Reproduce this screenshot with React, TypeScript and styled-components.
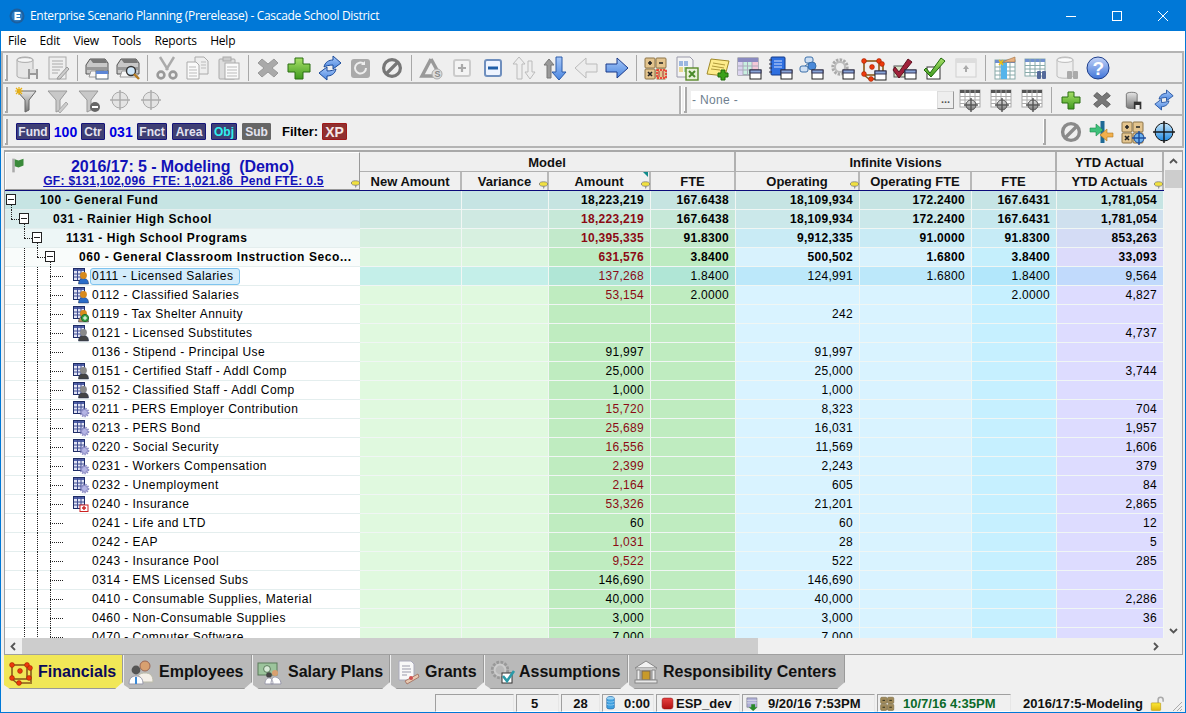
import React from "react";
import styled, { createGlobalStyle } from "styled-components";

const Global = createGlobalStyle`
  html, body { margin: 0; padding: 0; background: #f0f0f0; overflow: hidden; }
  * { box-sizing: border-box; }
  body { font-family: "Liberation Sans", Arial, sans-serif; font-size: 12px; color: #000; }
`;

const Window = styled.div`
  width: 1186px; height: 713px; display: flex; flex-direction: column;
  border: 1px solid #0078d7; border-top: 0; background: #f0f0f0; overflow: hidden;
`;
const TitleBar = styled.div`
  height: 31px; margin: 0 -1px; background: #0078d7; color: #fff; display: flex; align-items: center; padding-left: 9px;
  font-family: "Open Sans", sans-serif; font-size: 12px; flex: none;
`;
const TitleText = styled.span`margin-left: 5px; flex: 1; letter-spacing: -0.31px;`;
const WinBtn = styled.div`width: 46px; height: 31px; display: flex; align-items: center; justify-content: center;`;
const MenuBar = styled.div`
  height: 20px; background: #fff; display: flex; align-items: center; flex: none; padding: 0 0 1px 7px; gap: 13.4px;
  font-family: "Open Sans", sans-serif; font-size: 12px; letter-spacing: -0.2px;
`;
const ToolRow = styled.div<{ $top?: number }>`
  height: 32px; flex: none; display: flex; align-items: center; background: #efefef; margin-right: 1px;
  border-bottom: 2px solid #b4b4b4; border-right: 2px solid #b4b4b4; border-left: 2px solid #b4b4b4;
  padding: ${p => p.$top ?? 0}px 3px 0 2px;
`;
const ToolTop = styled(ToolRow)`height: 33px; border-top: 2px solid #b4b4b4;`;
const Grip = styled.div`
  width: 3px; height: 26px; flex: none; margin-right: 3px;
  border-right: 2px solid #aaa; border-bottom: 2px solid #aaa; box-shadow: inset -1px 0 #fff;
`;
const ToolBtn = styled.div<{ $w?: number }>`
  width: ${p => p.$w ?? 31}px; height: 28px; flex: none; display: flex; align-items: center; justify-content: center;
`;
const Sep = styled.div`width: 1px; height: 26px; background: #a8a8a8; margin: 0 3px 0 4px; flex: none;`;
const Spacer = styled.div<{ $w: number }>`width: ${p => p.$w}px; flex: none;`;
const Grow = styled.div`flex: 1;`;
const PaneDiv = styled.div`align-self: stretch; width: 2px; margin: 0 3px 0 0; background: #b4b4b4; box-shadow: 1px 0 #fff; flex: none;`;
const NoneInput = styled.div`
  width: 246px; height: 18px; background: #fff; color: #6f7f8f; display: flex; align-items: center; padding-left: 1px; flex: none;
  letter-spacing: .35px;
`;
const DotsBtn = styled.div`
  width: 17px; height: 18px; background: #eee; border: 1px solid #ddd; border-right-color: #999; border-bottom-color: #999; flex: none;
  text-align: center; line-height: 14px; color: #555; font-weight: bold; font-size: 11px;
`;
const Chip = styled.div<{ $w: number; $c?: string; $bg?: string; $b?: string }>`
  width: ${p => p.$w}px; height: 17px; flex: none; display: flex; align-items: center; justify-content: center;
  background: ${p => p.$bg ?? "#3f3f74"}; border: 1px solid ${p => p.$b ?? "#14147a"}; color: ${p => p.$c ?? "#e4e4f0"};
  font-weight: bold; font-size: 12px; border-radius: 1px;
`;
const ChipVal = styled.div<{ $w: number }>`width: ${p => p.$w}px; flex: none; text-align: center; color: #0000e0; font-weight: bold; font-size: 14px;`;
const FilterLabel = styled.div`font-weight: bold; font-size: 13px; margin: 0 4px 0 11px; flex: none;`;
const XP = styled(Chip)`font-size: 14px; color: #f4e6e6;`;

const Frame = styled.div`
  flex: 1; min-height: 0; margin: 2px 2px 0 3px; border: 1px solid #a0a0a0; border-top: 2px solid #a8a8a8; background: #f0f0f0;
  display: flex; flex-direction: column; overflow: hidden;
`;
const FrameMain = styled.div`flex: 1; min-height: 0; display: flex;`;
const Sheet = styled.div`width: 1159px; flex: none; overflow: hidden;`;
const cols = "355px 102px 87px 102px 85px 124px 112px 85px 107px";
const Head = styled.div`
  display: grid; grid-template-columns: ${cols}; grid-template-rows: 20px 18px; border-bottom: 1px solid #0a0a7a; height: 39px;
  font-weight: bold; font-size: 13px; background: #efefef;
`;
const CornerCell = styled.div`
  grid-row: 1 / span 2; position: relative; border: 1px solid #fff; border-right-color: #999; border-bottom-color: #999;
  display: flex; flex-direction: column; align-items: center; color: #1212b8; padding-top: 5px;
`;
const CornerTitle = styled.div`font-size: 16px; line-height: 17px; white-space: pre; letter-spacing: -.07px;`;
const CornerSub = styled.div`font-size: 12px; line-height: 12px; text-decoration: underline; white-space: pre; letter-spacing: .3px; margin-left: 2px;`;
const FlagPos = styled.span`position: absolute; left: 5px; top: 5px;`;
const NotePos = styled.span`position: absolute; right: -1px; bottom: 0; display: flex;`;
const GroupCell = styled.div<{ $span: number }>`
  grid-column: span ${p => p.$span}; border-right: 2px solid #b0b0b0; border-bottom: 1px solid #b0b0b0; display: flex; align-items: center; justify-content: center; color: #111; padding-top: 1px;
`;
const HeadCell = styled.div`
  position: relative; border-right: 2px solid #b8b8b8; display: flex; align-items: center; justify-content: center; color: #111; background: #f0f0f0;
`;
const Tri = styled.span`position: absolute; top: 0; right: 1px; width: 0; height: 0; border-top: 5px solid #0f8a8a; border-left: 5px solid transparent;`;
const Row = styled.div<{ $bold: boolean }>`
  display: grid; grid-template-columns: ${cols}; height: 19px; font-weight: ${p => (p.$bold ? "bold" : "normal")}; font-size: 12px; letter-spacing: .3px;
`;
const TreeCell = styled.div<{ $bg: string; $pad: number }>`
  position: relative; background: ${p => p.$bg}; border-bottom: 1px solid #e4eeee; padding-left: ${p => p.$pad}px; display: flex; align-items: center; white-space: pre;
`;
const Cell = styled.div<{ $bg: string; $red?: boolean }>`
  background: ${p => p.$bg}; border-right: 1px solid #f1f6f4; border-bottom: 1px solid #f0f6f4; display: flex; align-items: center; justify-content: flex-end;
  padding-right: 6px; color: ${p => (p.$red ? "#8b0a14" : "#000")};
`;
const Label = styled.span<{ $sel?: boolean; $bold?: boolean }>`
  letter-spacing: ${p => (p.$bold ? ".57px" : ".46px")};
  ${p => p.$sel && "background:#d3ecfb;border:1px solid #7fc4ef;border-radius:3px;margin:0 0 0 -2px;padding:0 6px 0 1px;height:17px;line-height:15px;"}
`;
const ExpBox = styled.span<{ $x: number }>`
  position: absolute; left: ${p => p.$x}px; top: 3px; width: 10px; height: 11px; border: 1px solid #222; background: #fff;
  &:after { content: ""; position: absolute; left: 1px; right: 1px; top: 4px; height: 1px; background: #222; }
`;
const VGuide = styled.span<{ $x: number; $t?: number; $h?: number }>`
  position: absolute; left: ${p => p.$x}px; top: ${p => p.$t ?? 0}px; height: ${p => p.$h ?? 19}px; border-left: 1px dotted #222;
`;
const HGuide = styled.span<{ $x: number; $w: number }>`
  position: absolute; left: ${p => p.$x}px; top: 9px; width: ${p => p.$w}px; border-top: 1px dotted #222;
`;
const RowIcon = styled.span`position: absolute; left: 68px; top: 1px; display: flex;`;
const VBar = styled.div`width: 18px; flex: none; display: flex; flex-direction: column; align-items: center; background: #f0f0f0; padding-top: 2px;`;
const VThumb = styled.div`width: 17px; height: 18px; background: #cdcdcd; margin-top: 2px;`;
const HBar = styled.div`height: 16px; flex: none; display: flex; align-items: center; background: #f0f0f0;`;
const HThumb = styled.div`width: 736px; height: 16px; background: #cdcdcd; flex: none;`;
const Arrow = styled.div<{ $w: number; $h: number }>`width: ${p => p.$w}px; height: ${p => p.$h}px; flex: none; display: flex; align-items: center; justify-content: center;`;
const Tabs = styled.div`height: 35px; flex: none; display: flex; padding-left: 3px; align-items: flex-start;`;
const Tab = styled.div<{ $w: number; $active?: boolean; $gap?: number }>`
  width: ${p => p.$w}px; height: 34px; flex: none; margin-right: 1px; display: flex; align-items: center; gap: ${p => p.$gap ?? 5}px;
  padding: 0 0 0 5px; font-weight: bold; font-size: 16px; white-space: nowrap;
  background: ${p => (p.$active ? "#f1e757" : "#b9b9b9")}; color: ${p => (p.$active ? "#0a0a5a" : "#111")};
  border-right: 1px solid #9a9a9a; border-bottom: 1px solid #999;
  clip-path: polygon(0 0, 100% 0, 100% calc(100% - 7px), calc(100% - 8px) 100%, 6px 100%, 0 calc(100% - 4px));
`;
const Status = styled.div`height: 18px; flex: none; margin-top: 4px; display: flex; align-items: stretch; font-weight: bold; font-size: 13px; padding-left: 434px; gap: 2px;`;
const Panel = styled.div<{ $w: number; $c?: string; $flat?: boolean; $pl?: number; $pr?: number; $gap?: number }>`
  width: ${p => p.$w}px; flex: none; display: flex; align-items: center; justify-content: ${p => (p.$pl !== undefined ? "flex-start" : "center")};
  gap: ${p => p.$gap ?? 4}px; color: ${p => p.$c ?? "#111"}; padding: 0 ${p => p.$pr ?? 0}px 0 ${p => p.$pl ?? 0}px;
  white-space: nowrap;
  ${p => !p.$flat && "border: 1px solid #fff; border-top-color: #a0a0a0; border-left-color: #a0a0a0; border-right-color:#e6e6e6;"}
`;
const ResizeGrip = styled.svg`align-self: flex-end; margin-left: 3px;`;

const Defs = styled.svg`position: absolute; width: 0; height: 0;`;

type Ic = { n: string; s?: number };

const Win = () => (
  <g><rect x="13" y="14" width="11" height="9" fill="#fff" stroke="#222" /><rect x="13" y="14" width="11" height="3" fill="#8aa6d8" stroke="#335" /></g>
);
const TablePic = ({ x = 2, y = 3, w = 18, h = 16, head = "#6f8fce", line = "#8aa" }: any) => (
  <g>
    <rect x={x} y={y} width={w} height={h} fill="#fff" stroke={line} />
    <rect x={x} y={y} width={w} height={3} fill={head} />
    {[1, 2, 3].map(i => <line key={i} x1={x + (w * i) / 4} x2={x + (w * i) / 4} y1={y} y2={y + h} stroke={line} />)}
    {[1, 2, 3].map(i => <line key={i} y1={y + 3 + ((h - 3) * i) / 4} y2={y + 3 + ((h - 3) * i) / 4} x1={x} x2={x + w} stroke={line} />)}
  </g>
);
const Target = ({ cx = 12, cy = 12, r = 8, fill = "url(#gGray)", st = "#777" }: any) => (
  <g>
    <circle cx={cx} cy={cy} r={r} fill={fill} stroke={st} />
    <line x1={cx - r - 2} x2={cx + r + 2} y1={cy} y2={cy} stroke={st} strokeWidth="1.4" />
    <line y1={cy - r - 2} y2={cy + r + 2} x1={cx} x2={cx} stroke={st} strokeWidth="1.4" />
  </g>
);
const Funnel = ({ c = "#c8c8c8", st = "#999" }: any) => (
  <path d="M2 3 H21 L14 12 V22 L10 24 V12 Z" fill={c} stroke={st} strokeWidth="1" />
);
const Tiles = ({ extra }: any) => (
  <g>
    {[[1, 2], [12, 2], [1, 13], [12, 13]].map(([x, y], i) => <rect key={i} x={x} y={y} width="10" height="10" rx="1" fill="#e3c48e" stroke="#8c7448" />)}
    <path d="M4 7h4M6 5v4M15 7h4M4 16l4 4M8 16l-4 4" stroke="#222" strokeWidth="1.6" />
    {extra}
  </g>
);
const Cube = () => (
  <g fill="none" stroke="#8a5a1a" strokeWidth="1.6">
    <rect x="3" y="5" width="15" height="14" /><path d="M3 19l5 4h15M18 5l4 3v14" />
    <g fill="#ee3a0c" stroke="#a02000" strokeWidth=".6">
      {[[3, 5], [18, 5], [11, 11], [3, 18], [10, 23], [21, 8], [20, 18]].map(([x, y], i) => <circle key={i} cx={x} cy={y} r="2.4" />)}
    </g>
  </g>
);
const Person = ({ c = "#2a6cc8", hair = "#d88a1c", skin }: any) => (
  <g>
    <path d="M5.500 16c0-4 2-5.500 5-5.500s5 1.500 5 5.500z" fill={c} stroke="#1c2c50" strokeWidth=".5" />
    <circle cx="10.500" cy="7.500" r="3.400" fill={hair} />
    {skin && <circle cx="10.500" cy="8.500" r="2.200" fill={skin} />}
  </g>
);
const Mini = () => (
  <g>
    <rect x=".5" y=".5" width="11" height="12" fill="#e2e4f4" stroke="#1e2c66" />
    <rect x="1" y="1" width="10" height="2" fill="#5060a8" />
    <path d="M4.500 1v11M8 1v11M1 6h10M1 9h10" stroke="#3c4a90" />
  </g>
);
const Arrows = () => (
  <g fill="url(#gBlue)" stroke="#1a4a9a">
    <path d="M6 11C7 6 11 4 15 4V0l8 7-8 6V9c-4 0-7 1-9 2z" />
    <path d="M18 13c-1 5-5 7-9 7v4l-8-7 8-6v4c4 0 7-1 9-2z" />
  </g>
);

const Icon = ({ n, s = 24 }: Ic) => {
  let c: React.ReactNode = null;
  switch (n) {
    case "dbSave": c = <g><path d="M2 4c0-4 16-4 16 0v16c0 3-16 3-16 0z" fill="#e6e6e6" stroke="#aaa" /><ellipse cx="10" cy="4" rx="8" ry="2.4" fill="#f6f6f6" stroke="#aaa" /><rect x="13" y="13" width="10" height="10" fill="#999" /><rect x="15" y="13" width="6" height="4" fill="#ddd" /><rect x="15" y="19" width="6" height="4" fill="#eee" /></g>; break;
    case "report": c = <g><rect x="3" y="1" width="17" height="22" fill="#eee" stroke="#aaa" /><path d="M6 5h11M6 8h11M6 11h11M6 14h8M6 17h6" stroke="#aaa" /><path d="M12 21l9-10 2 2-9 10h-3z" fill="#ccc" stroke="#999" /></g>; break;
    case "printer": case "printerZoom": c = <g><path d="M1 9l4-6h15l3 4v11H1z" fill="#c8c8c8" stroke="#555" /><path d="M5 3h15l2 4H8z" fill="#777" /><rect x="2" y="11" width="20" height="3" fill="#999" /><path d="M4 21l2-6h13l3 6z" fill="#f6f6f6" stroke="#999" />{n === "printer" ? <g><rect x="11" y="15" width="12" height="8" fill="#fff" stroke="#567" /><rect x="11" y="15" width="12" height="3" fill="#5c86d6" /></g> : <g><circle cx="15" cy="15" r="4.500" fill="#cfe6f8" stroke="#333" strokeWidth="1.4" /><path d="M18 18l5 5" stroke="#b47a20" strokeWidth="2.4" /></g>}</g>; break;
    case "scissors": c = <g stroke="#aaa" fill="none"><path d="M5 1l8 13M19 1l-8 13" strokeWidth="2.4" /><circle cx="6" cy="19" r="3.4" strokeWidth="2.6" stroke="#999" /><circle cx="18" cy="19" r="3.4" strokeWidth="2.6" stroke="#999" /></g>; break;
    case "copy": c = <g><path d="M9 1h9l4 4v13H9z" fill="#eee" stroke="#aaa" /><path d="M1 6h9l3 3v14H1z" fill="#fafafa" stroke="#aaa" /><path d="M3 11h7M3 14h8M3 17h8M3 20h8M15 6h5M15 9h5M15 12h5" stroke="#bbb" /></g>; break;
    case "paste": c = <g><rect x="2" y="3" width="16" height="20" rx="1" fill="#ddd" stroke="#aaa" /><rect x="6" y="1" width="8" height="4" fill="#ccc" stroke="#aaa" /><rect x="8" y="7" width="14" height="16" fill="#fafafa" stroke="#aaa" /><path d="M10 11h10M10 14h10M10 17h10M10 20h10" stroke="#bbb" /></g>; break;
    case "x": case "xDark": c = <path d="M6 3l6 5 6-5 4 4-6 5 6 5-4 4-6-5-6 5-4-4 6-5-6-5z" fill={n === "x" ? "#a9a9a9" : "#777"} stroke={n === "x" ? "#999" : "#555"} />; break;
    case "plus": c = <path d="M8 2h8v6h7v8h-7v7H8v-7H1V8h7z" fill="url(#gGreen)" stroke="#2a6e12" />; break;
    case "plusSm": c = <path d="M9 4h6v5h6v6h-6v6H9v-6H3V9h6z" fill="url(#gGreen)" stroke="#2a6e12" />; break;
    case "refresh": case "sync": c = <Arrows />; break;
    case "grayRefresh": c = <g><rect x="2" y="3" width="19" height="19" rx="3" fill="#aaa" /><path d="M17 12a5.5 5.5 0 1 1-2-4.2" fill="none" stroke="#eee" strokeWidth="2" /><path d="M16 5v4h-4z" fill="#eee" /></g>; break;
    case "no": c = <g fill="none" stroke="#777" strokeWidth="3.2"><circle cx="12" cy="12" r="8.4" /><path d="M6 18L18 6" /></g>; break;
    case "noLt": c = <g fill="none" stroke="#8a8a8a" strokeWidth="3.4"><circle cx="12" cy="12" r="8.4" /><path d="M6 18L18 6" /></g>; break;
    case "triS": c = <g><path d="M12 3L3 20h15" fill="none" stroke="#999" strokeWidth="3.4" /><path d="M12 3l6 11" stroke="#999" strokeWidth="3.4" /><circle cx="18" cy="18" r="5" fill="#ddd" stroke="#aaa" /><text x="15.6" y="21.4" fontSize="9" fontWeight="bold" fill="#888" fontFamily="Liberation Sans">S</text></g>; break;
    case "plusBox": c = <g><rect x="4" y="4" width="16" height="16" rx="2" fill="#f4f4f4" stroke="#ccc" strokeWidth="2" /><path d="M8 12h8M12 8v8" stroke="#aaa" strokeWidth="2.2" /></g>; break;
    case "minusBox": c = <g><rect x="4" y="4" width="16" height="16" rx="2" fill="#eef4ff" stroke="#6f8fbe" strokeWidth="2" /><rect x="7" y="10.5" width="10" height="3" fill="#1f5ea8" /></g>; break;
    case "updownA": c = <g stroke="#bbb" fill="#eee"><path d="M7 1l6 7H10v15H5V8H1z" /><path d="M18 23l-5-7h3V5h4v11h3z" /></g>; break;
    case "updownB": c = <g><path d="M6 3l5 6H8v13H4V9H1z" fill="#999" stroke="#777" /><path d="M16 24l7-8h-4V1h-6v15H9z" fill="url(#gBlue)" stroke="#2a5aa8" /></g>; break;
    case "left": c = <path d="M1 12l11-10v6h11v8H12v6z" fill="#ececec" stroke="#bbb" />; break;
    case "right": c = <path d="M23 12L12 2v6H1v8h11v6z" fill="url(#gBlue)" stroke="#1a3a8a" />; break;
    case "calcRed": c = <Tiles extra={<g><rect x="12" y="13" width="10" height="10" fill="#e3c48e" /><path d="M13 14h9v8h-9z" fill="none" stroke="#e22" strokeWidth="1.4" strokeDasharray="2 1" /><path d="M15 15v6M19 15v6" stroke="#a33" /></g>} />; break;
    case "calcTarget": c = <Tiles extra={<Target cx={18} cy={18} r={5} fill="#6fb4f0" st="#1a4a9a" />} />; break;
    case "excel": c = <g><path d="M2 1h13l3 3v17H2z" fill="#f4f4f4" stroke="#99a" /><path d="M4 5h4v5H4zM9 5h4v5H9z" fill="#9bb7e0" /><path d="M4 11h4v5H4z" fill="#e8d890" /><path d="M9 11h4v5H9z" fill="#a8d8a8" /><rect x="11" y="12" width="12" height="12" fill="#e8f0d8" stroke="#5a8a2a" strokeWidth="1.4" /><path d="M14 15l6 6M20 15l-6 6" stroke="#4a8a2a" strokeWidth="2" /></g>; break;
    case "note": c = <g><path d="M5 3l18 2-4 15-18-2z" fill="#fdeb8a" stroke="#a08a2a" /><path d="M7 7l12 2M6 10l12 2M5 13l9 1" stroke="#b09a3a" /><path d="M15 14h4v3h3v4h-3v3h-4v-3h-3v-4h3z" fill="#3aa01a" stroke="#1e6a0a" /></g>; break;
    case "tableWin": c = <g><rect x="1" y="2" width="20" height="17" fill="#c8f0e0" stroke="#778" /><rect x="1" y="2" width="20" height="4" fill="#8a8ac0" /><rect x="1" y="6" width="5" height="13" fill="#dcd4f0" /><rect x="15" y="6" width="6" height="13" fill="#f4c8d8" /><path d="M6 6v13M10.500 6v13M15 6v13M1 10h20M1 14h20" stroke="#aab" /><Win /></g>; break;
    case "blueWin": c = <g><rect x="3" y="1" width="14" height="18" rx="1" fill="#2e6fe0" stroke="#123a8a" /><path d="M6 5h8M6 8h8M6 11h8" stroke="#cfe0ff" /><path d="M1 4h3M1 8h3M1 12h3M1 16h3" stroke="#334" /><Win /></g>; break;
    case "orgWin": c = <g fill="#cfe0f4" stroke="#3a6ea8"><rect x="6" y="1" width="8" height="6" rx="2" /><rect x="1" y="10" width="8" height="6" rx="2" /><circle cx="13" cy="10" r="4" fill="#4a8ada" /><path d="M10 7l-4 3" fill="none" /><Win /></g>; break;
    case "gearWin": c = <g><circle cx="10" cy="11" r="7" fill="none" stroke="#aaa" strokeWidth="3.4" strokeDasharray="2.4 1.2" /><circle cx="10" cy="11" r="5" fill="none" stroke="#bbb" strokeWidth="2" /><Win /></g>; break;
    case "cubeWin": c = <g><Cube /><g transform="translate(1 1)"><Win /></g></g>; break;
    case "checkRed": c = <g><rect x="2" y="10" width="11" height="11" fill="#d8e4c8" stroke="#555" /><path d="M3 11l4 5L16 3l4 3L7 22 1 14z" fill="#a0203a" stroke="#601020" /><Win /></g>; break;
    case "checkGreen": c = <g><rect x="4" y="11" width="13" height="12" fill="#fff" stroke="#333" /><path d="M3 12l4 5L18 2l4 3L8 21 1 14z" fill="url(#gGreen)" stroke="#1e6a0a" /></g>; break;
    case "upload": c = <g><rect x="2" y="3" width="20" height="18" fill="#f2f2f2" stroke="#d0d0d0" /><rect x="2" y="3" width="20" height="4" fill="#ddd" /><path d="M12 9l3 4h-2v3h-2v-3H9z" fill="#aaa" /></g>; break;
    case "tableHand": c = <g><TablePic x={2} y={4} w={20} h={19} /><rect x="8" y="5" width="6" height="18" fill="#55b4ea" /><path d="M8 7l6-3 8-3v5h-8z" fill="#e8b080" stroke="#a07040" strokeWidth=".6" /><path d="M6 4l4 5M10 4L6 9" stroke="#f0c010" strokeWidth="1.4" /></g>; break;
    case "tableBinoc": c = <g><TablePic x={1} y={3} w={20} h={17} /><rect x="13" y="15" width="4" height="8" rx="1" fill="#556a9a" /><rect x="18" y="15" width="4" height="8" rx="1" fill="#556a9a" /></g>; break;
    case "dbBinoc": c = <g><path d="M2 4c0-4 16-4 16 0v16c0 3-16 3-16 0z" fill="#eee" stroke="#bbb" /><ellipse cx="10" cy="4" rx="8" ry="2.4" fill="#fafafa" stroke="#bbb" /><rect x="12" y="15" width="5" height="8" rx="1" fill="#aaa" /><rect x="18" y="15" width="5" height="8" rx="1" fill="#aaa" /></g>; break;
    case "help": c = <g><circle cx="12" cy="12" r="11" fill="url(#gHelp)" stroke="#1e3e8a" /><text x="6.500" y="19" fontSize="19" fontWeight="bold" fill="#fff" fontFamily="Liberation Sans">?</text></g>; break;
    case "filterStar": c = <g><Funnel c="url(#gGray)" st="#666" /><path d="M1 0l6 6M7 0L1 6M4-1v8M0 3h8" stroke="#e8b010" strokeWidth="1.2" /></g>; break;
    case "filterPen": c = <g><Funnel /><path d="M12 23l8-9 2 2-8 9z" fill="#ccc" stroke="#aaa" /></g>; break;
    case "filterMinus": c = <g><Funnel /><circle cx="18" cy="19" r="5" fill="#666" /><rect x="15" y="18" width="6" height="2" fill="#fff" /></g>; break;
    case "target": c = <Target fill="#e4e4e4" st="#aaa" />; break;
    case "tableTarget": c = <g><TablePic x={2} y={2} w={20} h={17} head="#555" line="#aaa" /><Target cx={13} cy={17} r={5} st="#555" /></g>; break;
    case "dbSm": c = <g><path d="M4 5c0-3 13-3 13 0v15c0 3-13 3-13 0z" fill="url(#gGray)" stroke="#666" /><rect x="13" y="14" width="9" height="9" fill="#333" /><rect x="15" y="18" width="5" height="5" fill="#eee" /></g>; break;
    case "merge": c = <g><rect x="10.500" y="1" width="4" height="22" fill="#1f6a96" /><path d="M0 8h6V4l7 6-7 6v-4H0z" fill="#3ec07a" stroke="#1a8a4a" strokeWidth=".6" /><path d="M23 13h-6V9l-7 6 7 6v-4h6z" fill="#f2b04e" stroke="#b07a20" strokeWidth=".6" /></g>; break;
    case "targetBlue": c = <Target r={9} fill="url(#gSky)" st="#111" />; break;
    case "cube": c = <Cube />; break;
    case "people": c = <g><circle cx="16" cy="6" r="5" fill="#d8a070" stroke="#965" /><path d="M8 22c0-7 3-9 8-9s8 2 8 9z" fill="#f4efe8" stroke="#bba" /><circle cx="7" cy="10" r="4.4" fill="#555" /><path d="M0 24c0-6 3-8 7-8s7 2 7 8z" fill="#fff" stroke="#99a" /><path d="M7 17v7" stroke="#3a8ad8" strokeWidth="2" /></g>; break;
    case "salary": c = <g><rect x="0" y="3" width="19" height="12" fill="#9cc49c" stroke="#5a7a5a" /><circle cx="9" cy="9" r="3.4" fill="#d8ead8" stroke="#5a7a5a" /><circle cx="17" cy="13" r="3" fill="#d8a070" /><circle cx="11" cy="15" r="2.8" fill="#444" /><path d="M7 24c0-4 2-6 4-6s4 2 4 6zM13 24c0-5 2-7 4-7s6 2 6 7z" fill="#fff" stroke="#99a" /></g>; break;
    case "grants": c = <g><path d="M3 1h12l3 3v16H3z" fill="#f8f8f8" stroke="#aab" /><path d="M6 6h8M6 9h9M6 12h9M6 15h5" stroke="#99a" /><path d="M9 21l13-7 1 3-12 7z" fill="#e8c8b0" stroke="#a87a6a" /><circle cx="15" cy="18" r="2" fill="#d05050" /></g>; break;
    case "assume": c = <g><circle cx="10" cy="10" r="7.400" fill="none" stroke="#999" strokeWidth="3.600" strokeDasharray="2.600 1.300" /><circle cx="10" cy="10" r="5.400" fill="none" stroke="#ccc" strokeWidth="2" /><rect x="12" y="13" width="10" height="10" fill="#fff" stroke="#333" /><path d="M13 16l4 5 7-10" fill="none" stroke="#2a9aa8" strokeWidth="2.600" /></g>; break;
    case "bank": c = <g><path d="M12 1L1 8h22z" fill="#f2f2f2" stroke="#888" /><rect x="2" y="8" width="20" height="2" fill="#ddd" stroke="#888" strokeWidth=".5" /><path d="M3 10h3v10H3zM18 10h3v10h-3z" fill="#eee" stroke="#888" /><rect x="8" y="11" width="8" height="9" fill="#c89a2a" stroke="#765" /><rect x="1" y="20" width="22" height="3" fill="#e8e8e8" stroke="#888" /></g>; break;
    case "dbBlue": c = <g><path d="M3 4c0-4 13-4 13 0v16c0 3-13 3-13 0z" fill="#3fa0e0" stroke="#1a5a9a" /><path d="M3 9c3 2 10 2 13 0M3 14c3 2 10 2 13 0" fill="none" stroke="#bfe4fa" /><ellipse cx="9.500" cy="4" rx="6.500" ry="2.200" fill="#9cd4f4" /></g>; break;
    case "stop": c = <rect x="2" y="2" width="20" height="20" rx="4" fill="url(#gRed)" stroke="#901010" />; break;
    case "dbDown": c = <g><path d="M3 3h16v15H3z" fill="#b0b0d8" stroke="#778" /><path d="M3 7h16M3 11h16" stroke="#eee" /><path d="M10 13h6v5h4l-7 6-7-6h4z" fill="#2a8a2a" /></g>; break;
    case "calcTan": c = <g>{[[1, 2], [12, 2], [1, 13], [12, 13]].map(([x, y], i) => <rect key={i} x={x} y={y} width="10" height="10" rx="2" fill="#a08a5a" stroke="#7a6a40" />)}<path d="M4 7h4M15 7h4M4 18h4M15 18h4" stroke="#332" strokeWidth="1.600" /></g>; break;
    case "lock": c = <g><path d="M13 11V6a4 4 0 0 1 8 0v3" fill="none" stroke="#aaa" strokeWidth="2.500" /><rect x="2" y="11" width="15" height="12" rx="1" fill="url(#gGold)" stroke="#b89a10" /></g>; break;
    case "flag": c = <g><rect x="2" y="1" width="4" height="22" fill="#aaa" /><path d="M6 2l6 2 8-3v11l-8 3-6-2z" fill="#3a8a3a" /></g>; break;
    case "comment": c = <g><ellipse cx="12" cy="8" rx="11" ry="6" fill="#f0e040" stroke="#777" strokeWidth="2" /><path d="M10 14h5l-2 8z" fill="#888" /></g>; break;
    case "m0": c = <g><Mini /><Person /></g>; break;
    case "m1": c = <g><Mini /><Person c="#b58a5a" /><circle cx="12" cy="12" r="3.600" fill="#3aa84a" stroke="#1a6a2a" /><path d="M10 12h4M12 10v4" stroke="#fff" /></g>; break;
    case "m2": c = <g><Mini /><Person c="#444" hair="#8a8a8a" /></g>; break;
    case "m3": c = <g><Mini /><circle cx="11.500" cy="11.500" r="3" fill="#b4b4e4" stroke="#8a8ac4" /><circle cx="11.500" cy="11.500" r="4" fill="none" stroke="#8a8ac4" strokeWidth="1.600" strokeDasharray="1.500 .9" /></g>; break;
    case "m4": c = <g><Mini /><rect x="7" y="9" width="8" height="6.500" fill="#fff" stroke="#c22" /><path d="M9 12h4M11 10v4" stroke="#c22" strokeWidth="1.400" /></g>; break;
  }
  const vb = n.length === 2 && n[0] === "m" ? "0 0 16 16" : "0 0 24 24";
  return <svg width={s} height={s} viewBox={vb} style={{ flex: "none", overflow: "visible" }}>{c}</svg>;
};

const Tb = ({ n, s }: Ic) => <ToolBtn><Icon n={n} s={s} /></ToolBtn>;

type R = { t: string; lv: number; ic?: string; a?: string; red?: boolean; f?: string; o?: string; of?: string; f2?: string; y?: string };
const rows: R[] = [
  { t: "100 - General Fund", lv: 0, a: "18,223,219", f: "167.6438", o: "18,109,934", of: "172.2400", f2: "167.6431", y: "1,781,054" },
  { t: "031 - Rainier High School", lv: 1, a: "18,223,219", red: true, f: "167.6438", o: "18,109,934", of: "172.2400", f2: "167.6431", y: "1,781,054" },
  { t: "1131 - High School Programs", lv: 2, a: "10,395,335", red: true, f: "91.8300", o: "9,912,335", of: "91.0000", f2: "91.8300", y: "853,263" },
  { t: "060 - General Classroom Instruction Seco...", lv: 3, a: "631,576", red: true, f: "3.8400", o: "500,502", of: "1.6800", f2: "3.8400", y: "33,093" },
  { t: "0111 - Licensed Salaries", lv: 4, ic: "m0", a: "137,268", red: true, f: "1.8400", o: "124,991", of: "1.6800", f2: "1.8400", y: "9,564" },
  { t: "0112 - Classified Salaries", lv: 4, ic: "m0", a: "53,154", red: true, f: "2.0000", f2: "2.0000", y: "4,827" },
  { t: "0119 - Tax Shelter Annuity", lv: 4, ic: "m1", o: "242" },
  { t: "0121 - Licensed Substitutes", lv: 4, ic: "m2", y: "4,737" },
  { t: "0136 - Stipend - Principal Use", lv: 4, a: "91,997", o: "91,997" },
  { t: "0151 - Certified Staff - Addl Comp", lv: 4, ic: "m2", a: "25,000", o: "25,000", y: "3,744" },
  { t: "0152 - Classified Staff - Addl Comp", lv: 4, ic: "m2", a: "1,000", o: "1,000" },
  { t: "0211 - PERS Employer Contribution", lv: 4, ic: "m3", a: "15,720", red: true, o: "8,323", y: "704" },
  { t: "0213 - PERS Bond", lv: 4, ic: "m3", a: "25,689", red: true, o: "16,031", y: "1,957" },
  { t: "0220 - Social Security", lv: 4, ic: "m3", a: "16,556", red: true, o: "11,569", y: "1,606" },
  { t: "0231 - Workers Compensation", lv: 4, ic: "m3", a: "2,399", red: true, o: "2,243", y: "379" },
  { t: "0232 - Unemployment", lv: 4, ic: "m3", a: "2,164", red: true, o: "605", y: "84" },
  { t: "0240 - Insurance", lv: 4, ic: "m4", a: "53,326", red: true, o: "21,201", y: "2,865" },
  { t: "0241 - Life and LTD", lv: 4, a: "60", o: "60", y: "12" },
  { t: "0242 - EAP", lv: 4, a: "1,031", red: true, o: "28", y: "5" },
  { t: "0243 - Insurance Pool", lv: 4, a: "9,522", red: true, o: "522", y: "285" },
  { t: "0314 - EMS Licensed Subs", lv: 4, a: "146,690", o: "146,690" },
  { t: "0410 - Consumable Supplies, Material", lv: 4, a: "40,000", o: "40,000", y: "2,286" },
  { t: "0460 - Non-Consumable Supplies", lv: 4, a: "3,000", o: "3,000", y: "36" },
  { t: "0470 - Computer Software", lv: 4, a: "7,000", o: "7,000" },
];

// [tree, new amount/variance, amount/fte, operating/op fte, fte, ytd]
const palette: Record<string, string[]> = {
  r0: ["#c6e4e3", "#c6e4e3", "#c6e4e1", "#c6e4e3", "#c6e4e5", "#c6e4e3"],
  r1: ["#daeded", "#cfe9e2", "#c6e8d8", "#cbe8ea", "#c6e8ee", "#cfe0ee"],
  r2: ["#edf6f6", "#d7f0e0", "#c2e9cb", "#c9ebf5", "#c6ebf6", "#d4dcf5"],
  r3: ["#f9fcfb", "#dcf6df", "#bdebc1", "#d8f2fd", "#c5effc", "#dcdbfb"],
  sel: ["#ffffff", "#c4efe9", "#b0e6d6", "#bce8fa", "#b2e7fb", "#c1dafc"],
  n: ["#ffffff", "#e0f9df", "#bfecc0", "#d9f3ff", "#c6f0ff", "#dddcff"],
};

const TreeGuides = ({ lv, i }: { lv: number; i: number }) => (
  <>
    {i === 0 && <VGuide $x={6} $t={13} $h={6} />}
    {i === 1 && <><VGuide $x={6} $t={0} $h={9} /><HGuide $x={6} $w={8} /></>}
    {i >= 1 && lv >= 1 && <VGuide $x={19} $t={i === 1 ? 13 : 0} $h={i === 1 ? 6 : i === 2 ? 9 : 19} />}
    {i >= 2 && lv >= 2 && <><VGuide $x={32} $t={i === 2 ? 13 : 0} $h={i === 2 ? 6 : i === 3 ? 9 : 19} /></>}
    {i === 2 && <HGuide $x={19} $w={8} />}
    {i === 3 && <HGuide $x={32} $w={8} />}
    {i === 3 && <VGuide $x={45} $t={13} $h={6} />}
    {i >= 4 && <><VGuide $x={45} /><HGuide $x={45} $w={13} /></>}
    {lv < 4 && <ExpBox $x={1 + lv * 13} />}
  </>
);

const GridRow = ({ r, i }: { r: R; i: number }) => {
  const key = i < 4 ? `r${i}` : i === 4 ? "sel" : "n";
  const p = palette[key];
  return (
    <Row $bold={i < 4}>
      <TreeCell $bg={p[0]} $pad={35 + r.lv * 13}>
        <TreeGuides lv={r.lv} i={i} />
        {r.ic && <RowIcon><Icon n={r.ic} s={16} /></RowIcon>}
        <Label $sel={i === 4} $bold={i < 4}>{r.t}</Label>
      </TreeCell>
      <Cell $bg={p[1]} />
      <Cell $bg={p[1]} />
      <Cell $bg={p[2]} $red={r.red}>{r.a}</Cell>
      <Cell $bg={p[2]}>{r.f}</Cell>
      <Cell $bg={p[3]}>{r.o}</Cell>
      <Cell $bg={p[3]}>{r.of}</Cell>
      <Cell $bg={p[4]}>{r.f2}</Cell>
      <Cell $bg={p[5]}>{r.y}</Cell>
    </Row>
  );
};

const Note = () => <NotePos><Icon n="comment" s={9} /></NotePos>;
const Chev = ({ d }: { d: string }) => (
  <svg width="9" height="9" viewBox="0 0 9 9"><path d={d} fill="none" stroke="#555" strokeWidth="1.800" /></svg>
);

export default function App() {
  return (
    <Window>
      <Global />
      <Defs>
        <defs>
          <linearGradient id="gGreen" x1="0" y1="0" x2="0" y2="1"><stop offset="0" stopColor="#a8e068" /><stop offset="1" stopColor="#3f9a1e" /></linearGradient>
          <linearGradient id="gBlue" x1="0" y1="0" x2="0" y2="1"><stop offset="0" stopColor="#a8c8f8" /><stop offset="1" stopColor="#4a86e0" /></linearGradient>
          <linearGradient id="gGray" x1="0" y1="0" x2="0" y2="1"><stop offset="0" stopColor="#e4e4e4" /><stop offset="1" stopColor="#777" /></linearGradient>
          <linearGradient id="gHelp" x1="0" y1="0" x2="0" y2="1"><stop offset="0" stopColor="#c4d4f8" /><stop offset="1" stopColor="#3f74d8" /></linearGradient>
          <linearGradient id="gSky" x1="0" y1="0" x2="0" y2="1"><stop offset="0" stopColor="#c8e8fc" /><stop offset="1" stopColor="#1e88e0" /></linearGradient>
          <linearGradient id="gRed" x1="0" y1="0" x2="0" y2="1"><stop offset="0" stopColor="#e84040" /><stop offset="1" stopColor="#b01010" /></linearGradient>
          <linearGradient id="gGold" x1="0" y1="0" x2="0" y2="1"><stop offset="0" stopColor="#fce838" /><stop offset="1" stopColor="#e0b810" /></linearGradient>
        </defs>
      </Defs>
      <TitleBar>
        <svg width="16" height="16" viewBox="0 0 16 16"><circle cx="8" cy="8" r="7.500" fill="#1d5f9e" /><circle cx="8" cy="8" r="5.500" fill="#2c7cc4" /><path d="M5.500 4h6v2H7.500v1h3.500v2H7.500v1h4v2h-6z" fill="#fff" /></svg>
        <TitleText>Enterprise Scenario Planning (Prerelease) - Cascade School District</TitleText>
        <WinBtn><svg width="10" height="10"><rect y="5" width="10" height="1" fill="#fff" /></svg></WinBtn>
        <WinBtn><svg width="10" height="10"><rect x=".5" y=".5" width="9" height="9" fill="none" stroke="#fff" /></svg></WinBtn>
        <WinBtn><svg width="10" height="10"><path d="M0 0l10 10M10 0L0 10" stroke="#fff" /></svg></WinBtn>
      </TitleBar>
      <MenuBar>
        {["File", "Edit", "View", "Tools", "Reports", "Help"].map(m => <span key={m}>{m}</span>)}
      </MenuBar>
      <ToolTop>
        <Grip />
        <Tb n="dbSave" /><Tb n="report" /><Sep />
        <Tb n="printer" /><Tb n="printerZoom" /><Sep />
        <Tb n="scissors" /><Tb n="copy" /><Tb n="paste" /><Sep />
        <Tb n="x" /><Tb n="plus" /><Tb n="refresh" /><Tb n="grayRefresh" /><Tb n="no" /><Sep />
        <Tb n="triS" /><Tb n="plusBox" /><Tb n="minusBox" /><Tb n="updownA" /><Tb n="updownB" /><Tb n="left" /><Tb n="right" /><Sep />
        <Tb n="calcRed" /><Tb n="excel" /><Tb n="note" /><Tb n="tableWin" /><Tb n="blueWin" /><Tb n="orgWin" /><Tb n="gearWin" /><Tb n="cubeWin" /><Tb n="checkRed" /><Tb n="checkGreen" /><Tb n="upload" /><Sep />
        <Tb n="tableHand" /><Tb n="tableBinoc" /><Tb n="dbBinoc" /><Tb n="help" />
      </ToolTop>
      <ToolRow $top={2}>
        <Grip />
        <Tb n="filterStar" /><Tb n="filterPen" /><Tb n="filterMinus" /><Tb n="target" /><Tb n="target" />
        <Grow />
        <PaneDiv />
        <Grip />
        <Spacer $w={1} />
        <NoneInput>- None -</NoneInput>
        <DotsBtn>...</DotsBtn>
        <Tb n="tableTarget" /><Tb n="tableTarget" /><Tb n="tableTarget" /><Sep />
        <Tb n="plusSm" /><Tb n="xDark" s={20} /><Tb n="dbSm" s={20} /><Tb n="sync" s={20} />
      </ToolRow>
      <ToolRow $top={1}>
        <Grip />
        <Spacer $w={5} />
        <Chip $w={34}>Fund</Chip><ChipVal $w={31}>100</ChipVal>
        <Chip $w={24}>Ctr</Chip><ChipVal $w={32}>031</ChipVal>
        <Chip $w={30}>Fnct</Chip><Spacer $w={5} />
        <Chip $w={34}>Area</Chip><Spacer $w={5} />
        <Chip $w={26} $c="#30f0f0">Obj</Chip><Spacer $w={5} />
        <Chip $w={29} $bg="#666" $b="#666">Sub</Chip>
        <FilterLabel>Filter:</FilterLabel>
        <XP $w={25} $bg="#903030" $b="#a01818">XP</XP>
        <Grow />
        <Grip />
        <Spacer $w={6} />
        <Tb n="noLt" /><Tb n="merge" /><Tb n="calcTarget" /><Tb n="targetBlue" />
      </ToolRow>
      <Frame>
        <FrameMain>
          <Sheet>
            <Head>
              <CornerCell>
                <FlagPos><Icon n="flag" s={15} /></FlagPos>
                <CornerTitle>2016/17: 5 - Modeling  (Demo)</CornerTitle>
                <CornerSub>GF: $131,102,096  FTE: 1,021.86  Pend FTE: 0.5</CornerSub>
                <Note />
              </CornerCell>
              <GroupCell $span={4}>Model</GroupCell>
              <GroupCell $span={3}>Infinite Visions</GroupCell>
              <GroupCell $span={1}>YTD Actual</GroupCell>
              <HeadCell>New Amount</HeadCell>
              <HeadCell>Variance<Note /></HeadCell>
              <HeadCell>Amount<Tri /><Note /></HeadCell>
              <HeadCell>FTE</HeadCell>
              <HeadCell>Operating<Note /></HeadCell>
              <HeadCell>Operating FTE</HeadCell>
              <HeadCell>FTE</HeadCell>
              <HeadCell>YTD Actuals<Note /></HeadCell>
            </Head>
            {rows.map((r, i) => <GridRow key={r.t} r={r} i={i} />)}
          </Sheet>
          <VBar>
            <Arrow $w={17} $h={14}><Chev d="M1 6l3.500-3.500L8 6" /></Arrow>
            <VThumb />
            <Grow />
            <Arrow $w={17} $h={16}><Chev d="M1 3l3.500 3.500L8 3" /></Arrow>
          </VBar>
        </FrameMain>
        <HBar>
          <Arrow $w={17} $h={16}><Chev d="M6 1L2.500 4.500 6 8" /></Arrow>
          <HThumb />
          <Grow />
          <Arrow $w={17} $h={16}><Chev d="M3 1l3.500 3.500L3 8" /></Arrow>
          <Spacer $w={18} />
        </HBar>
      </Frame>
      <Tabs>
        <Tab $w={119} $active><Icon n="cube" />Financials</Tab>
        <Tab $w={128} $gap={6}><Icon n="people" />Employees</Tab>
        <Tab $w={137} $gap={6}><Icon n="salary" />Salary Plans</Tab>
        <Tab $w={93}><Icon n="grants" />Grants</Tab>
        <Tab $w={143}><Icon n="assume" />Assumptions</Tab>
        <Tab $w={216}><Icon n="bank" />Responsibility Centers</Tab>
      </Tabs>
      <Status>
        <Panel $w={79} />
        <Panel $w={43} $pr={6}>5</Panel>
        <Panel $w={39}>28</Panel>
        <Panel $w={52} $pl={2} $gap={5}><Icon n="dbBlue" s={14} />0:00</Panel>
        <Panel $w={84} $pl={4} $gap={2}><Icon n="stop" s={13} />ESP_dev</Panel>
        <Panel $w={133} $pl={2} $gap={8}><Icon n="dbDown" s={15} />9/20/16 7:53PM</Panel>
        <Panel $w={134} $c="#0a6a2a" $pl={2} $gap={8}><Icon n="calcTan" s={15} />10/7/16 4:35PM</Panel>
        <Spacer $w={8} />
        <Panel $w={143} $pl={0} $gap={7} $flat>2016/17:5-Modeling<Icon n="lock" s={15} /></Panel>
        <ResizeGrip width="12" height="12" viewBox="0 0 12 12"><path d="M11 2L2 11M11 6l-5 5M11 9l-2 2" stroke="#aaa" /></ResizeGrip>
      </Status>
    </Window>
  );
}
